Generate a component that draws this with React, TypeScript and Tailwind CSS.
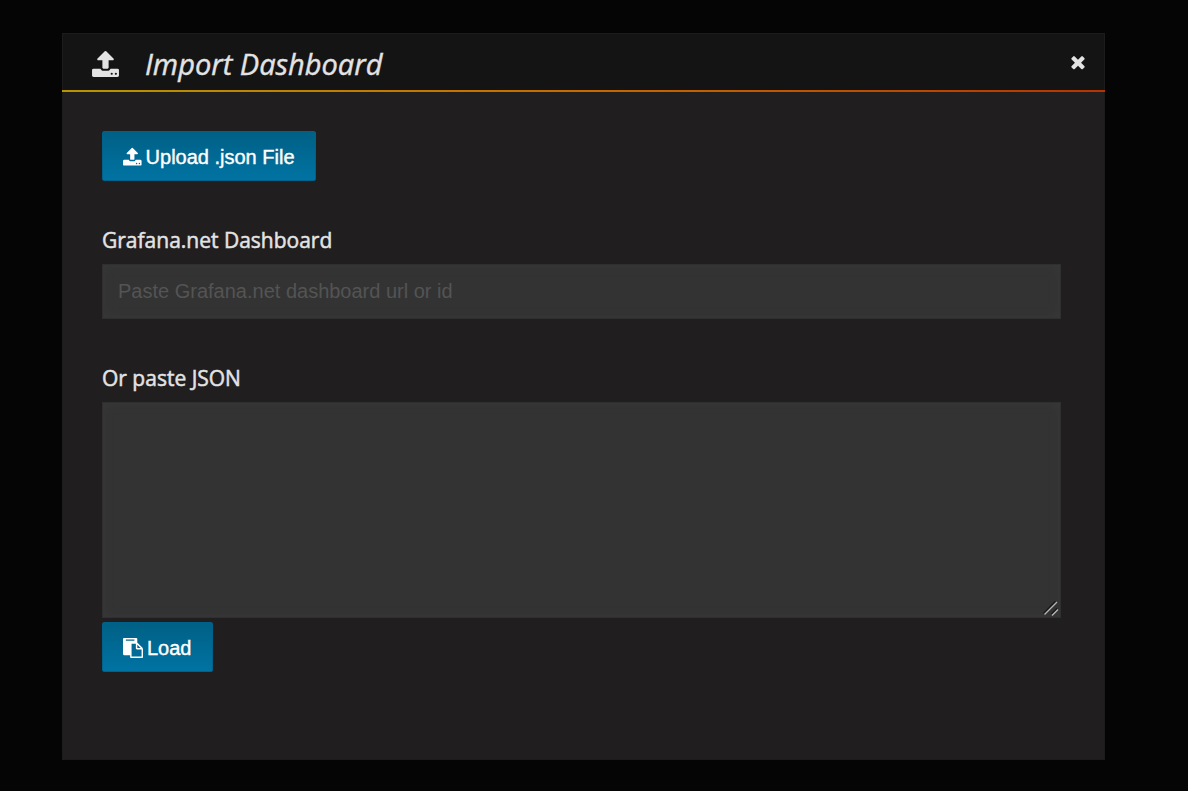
import type { ReactNode } from "react";

const icons = {
  upload: {
    viewBox: "64 0 1664 1792",
    path: "M1344 1472q0-26-19-45t-45-19-45 19-19 45 19 45 45 19 45-19 19-45zm256 0q0-26-19-45t-45-19-45 19-19 45 19 45 45 19 45-19 19-45zm128-224v320q0 40-28 68t-68 28h-1472q-40 0-68-28t-28-68v-320q0-40 28-68t68-28h427q21 56 70.5 92t110.5 36h256q61 0 110.5-36t70.5-92h427q40 0 68 28t28 68zm-325-648q-17 40-59 40h-256v448q0 26-19 45t-45 19h-256q-26 0-45-19t-19-45v-448h-256q-42 0-59-40-17-39 14-69l448-448q18-19 45-19t45 19l448 448q31 30 14 69z",
  },
  close: {
    viewBox: "0 0 1792 1792",
    path: "M1490 1322q0 40-28 68l-136 136q-28 28-68 28t-68-28l-294-294-294 294q-28 28-68 28t-68-28l-136-136q-28-28-28-68t28-68l294-294-294-294q-28-28-28-68t28-68l136-136q28-28 68-28t68 28l294 294 294-294q28-28 68-28t68 28l136 136q28 28 28 68t-28 68l-294 294 294 294q28 28 28 68z",
  },
  paste: {
    viewBox: "0 0 1792 1792",
    path: "M768 1664h896v-640h-416q-40 0-68-28t-28-68v-416h-384v1152zm256-1440v-64q0-13-9.5-22.5t-22.5-9.5h-704q-13 0-22.5 9.5t-9.5 22.5v64q0 13 9.5 22.5t22.5 9.5h704q13 0 22.5-9.5t9.5-22.5zm256 672h299l-299-299v299zm512 128v672q0 40-28 68t-68 28h-960q-40 0-68-28t-28-68v-160h-544q-40 0-68-28t-28-68v-1344q0-40 28-68t68-28h1088q40 0 68 28t28 68v328q21 13 36 28l408 408q28 28 48 76t20 88z",
  },
};

type IconName = keyof typeof icons;

function Icon({ name, className }: { name: IconName; className: string }) {
  return (
    <svg viewBox={icons[name].viewBox} fill="currentColor" aria-hidden="true" className={className}>
      <path d={icons[name].path} />
    </svg>
  );
}

function PrimaryButton({ icon, children }: { icon: IconName; children: ReactNode }) {
  return (
    <button
      type="button"
      className="flex h-[50px] items-center gap-1 rounded-xs border border-[#00628a] bg-linear-to-b from-[#006085] to-[#0073a3] px-5 pt-[2px] font-['Liberation_Sans',sans-serif] text-xl text-white [-webkit-text-stroke:0.4px_white] text-shadow-[0_-1px_0_rgb(0_0_0/0.1)]"
    >
      <Icon name={icon} className="h-5 w-auto" />
      {children}
    </button>
  );
}

const field =
  "block w-full rounded-none border border-[#2f2f2f] bg-[#333333] px-[15px] font-['Liberation_Sans',sans-serif] text-xl text-[#d8d9da] shadow-[inset_0_0_8px_1px_#383838] outline-none placeholder:text-[#545454]";

const label =
  "mt-[43px] mb-2 block text-[21px] leading-8 text-[#e3e3e3] [-webkit-text-stroke:0.5px_#e3e3e3]";

export default function App() {
  return (
    <main className="min-h-screen bg-[#050505] pt-[33px] pr-[83px] pb-[31px] pl-[62px] font-['Open_Sans',sans-serif]">
      <section
        role="dialog"
        aria-labelledby="dialog-title"
        className="border border-[#1c1c1c] bg-[#201e1f] pb-[87px]"
      >
        <header className="flex h-[56px] items-center bg-[#141414] pr-[16px] pl-[29px] text-[#e3e3e3]">
          <Icon name="upload" className="mt-1 h-[29px] w-[27px]" />
          <h1
            id="dialog-title"
            className="mt-1 ml-[26px] text-[29px] italic [-webkit-text-stroke:0.4px_#e3e3e3]"
          >
            Import Dashboard
          </h1>
          <button type="button" aria-label="Close" className="ml-auto">
            <Icon name="close" className="size-5" />
          </button>
        </header>
        <div className="-mx-px h-[2px] bg-linear-to-r from-[#b79500] via-[#c66a00] to-[#b53300]" />

        <form className="pt-[39px] pr-[43px] pl-[39px]">
          <PrimaryButton icon="upload">Upload .json File</PrimaryButton>

          <label htmlFor="dashboard-url" className={label}>
            Grafana.net Dashboard
          </label>
          <input
            id="dashboard-url"
            type="text"
            placeholder="Paste Grafana.net dashboard url or id"
            className={`${field} h-[55px]`}
          />

          <label htmlFor="dashboard-json" className={label}>
            Or paste JSON
          </label>
          <div className="relative mb-1">
            <textarea id="dashboard-json" className={`${field} h-[216px] resize-none py-3`} />
            <svg
              viewBox="0 0 16 16"
              fill="none"
              aria-hidden="true"
              className="pointer-events-none absolute right-[2px] bottom-px size-4"
            >
              <path d="M0.5 12.5L12.5 0.5M8.5 13L14 7.5" stroke="#161616" strokeWidth="1.5" />
              <path d="M1.5 13.5L14 1M9 14.5L15 8.5" stroke="#b5b5b5" strokeWidth="1.4" />
            </svg>
          </div>

          <PrimaryButton icon="paste">Load</PrimaryButton>
        </form>
      </section>
    </main>
  );
}
